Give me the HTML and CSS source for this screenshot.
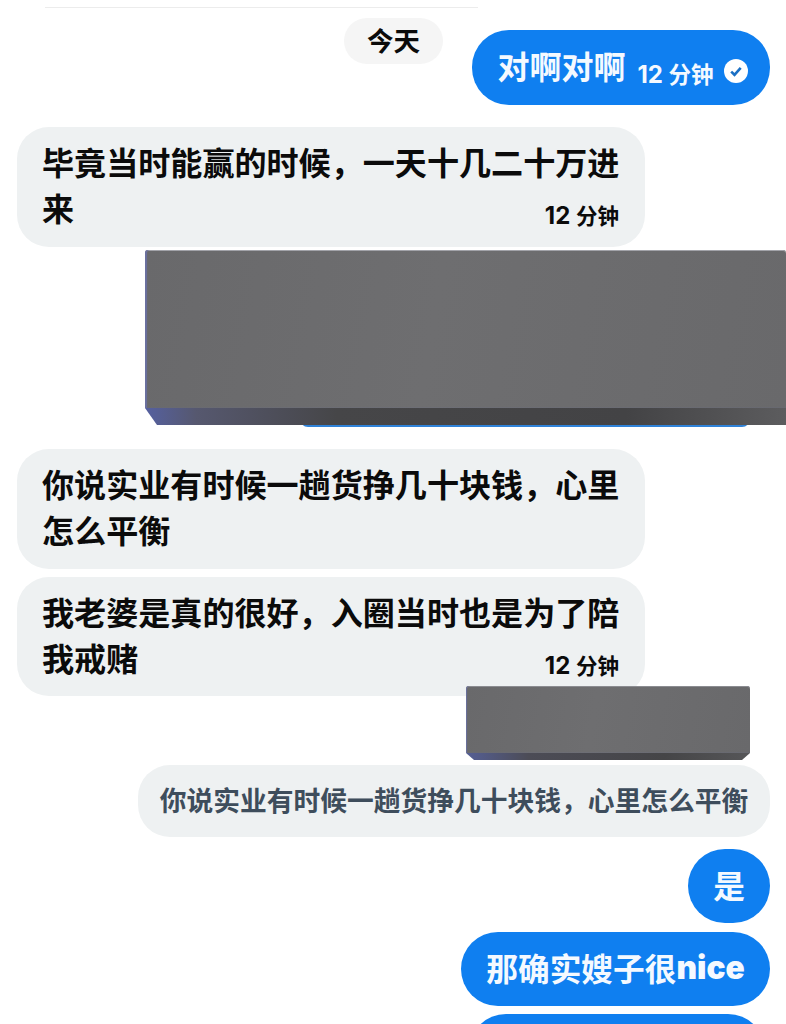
FILE: index.html
```html
<!DOCTYPE html>
<html lang="zh-CN">
<head>
  <meta charset="UTF-8" />
  <meta name="viewport" content="width=device-width, initial-scale=1.0"/>
  <title>聊天记录</title>
  <link rel="stylesheet" href="styles.css">
</head>
<body>
  <div class="chat">
    <div class="top-line"></div>

    <div class="day-row">
      <div class="day-chip">今天</div>
      <div class="bubble sent first">
        <span class="first-text">对啊对啊</span>
        <span class="time">12 <i>分钟</i></span>
        <svg class="check" viewBox="0 0 24 24">
          <circle cx="12" cy="12" r="12" fill="#fff"/>
          <path d="M7.2 12.6l3.3 3.2 6.2-7" fill="none" stroke="#1a6fc4" stroke-width="2.6"/>
        </svg>
      </div>
    </div>

    <div class="bubble received after-day">
      <div>毕竟当时能赢的时候，一天十几二十万进</div>
      <div class="last-line">
        <span>来</span>
        <span class="time">12 <i>分钟</i></span>
      </div>
    </div>

    <div class="redact-wrap">
      <div class="sliver"></div>
      <div class="redact big"><div class="face"></div><div class="bevel"></div></div>
    </div>

    <div class="bubble received">
      <div>你说实业有时候一趟货挣几十块钱，心里怎么平衡</div>
    </div>

    <div class="bubble received next">
      <div>我老婆是真的很好，入圈当时也是为了陪</div>
      <div class="last-line">
        <span>我戒赌</span>
        <span class="time">12 <i>分钟</i></span>
      </div>
    </div>

    <div class="redact small"><div class="face"></div><div class="bevel"></div></div>

    <div class="bubble quote">你说实业有时候一趟货挣几十块钱，心里怎么平衡</div>

    <div class="bubble sent solo">是</div>
    <div class="bubble sent wide">那确实嫂子很<b>nice</b></div>
    <div class="bubble sent cut"></div>
  </div>
</body>
</html>
```

FILE: styles.css
```css
:root {
  --blue: #0f7ff0;
  --grey: #eef1f2;
}

html, body {
  height: 1024px;
  margin: 0;
  overflow: hidden;
  background: #fff;
  font-family: "Inter", "Noto Sans CJK SC", sans-serif;
  color: #0b0b0b;
}

.chat {
  box-sizing: border-box;
  display: flex;
  flex-direction: column;
  align-items: flex-end;
  height: 1024px;
  padding: 7px 16px 0 17px;
  overflow: hidden;
}

.chat > * {
  flex-shrink: 0;
}

.top-line {
  align-self: flex-start;
  width: 433px;
  height: 1px;
  margin-left: 28px;
  background: #ececec;
}

.day-row {
  display: flex;
  align-items: flex-start;
  margin-top: 10px;
}

.day-chip {
  width: 99px;
  height: 46px;
  margin-right: 29px;
  border-radius: 23px;
  background: #f5f5f5;
  font-size: 26.5px;
  font-weight: 600;
  line-height: 46px;
  text-align: center;
}

.bubble {
  box-sizing: border-box;
  font-weight: 700;
}

.sent {
  display: flex;
  align-items: center;
  justify-content: center;
  height: 74px;
  padding-bottom: 4px;
  border-radius: 37px;
  background: var(--blue);
  color: #f4f9ff;
  font-size: 31.7px;
  font-weight: 700;
}

.first {
  width: 298px;
  height: 75px;
  margin-top: 12px;
  padding: 0 0 0 3px;
}

.first-text {
  margin-bottom: 6px;
  font-size: 32px;
}

.first .time {
  margin: 14px 0 0 12px;
}

.first .time i {
  font-size: 22.5px;
}

.check {
  width: 24px;
  height: 24px;
  margin: 7px 0 0 10px;
}

.time {
  font-size: 24px;
  font-weight: 700;
  line-height: 30px;
  white-space: nowrap;
}

.time i {
  font-size: 21.5px;
  font-style: normal;
  font-weight: 700;
}

.received {
  align-self: flex-start;
  width: 628px;
  height: 120px;
  padding: 14px 24px 0 25px;
  border-radius: 32px;
  background: var(--grey);
  font-size: 32.1px;
  line-height: 46px;
}

.last-line {
  display: flex;
  justify-content: space-between;
  align-items: center;
}

.last-line .time {
  margin: 11px 2px 0 0;
}

.after-day {
  margin-top: 22px;
}

.next {
  height: 119px;
  margin-top: 8px;
}

.redact-wrap {
  align-self: flex-start;
  height: 177px;
  margin: 3px 0 22px 128px;
}

.redact-wrap .sliver {
  width: 450px;
  height: 12px;
  margin: 165px 0 0 155px;
  border-radius: 0 0 8px 8px;
  background: #2f82d8;
}

.redact {
  display: flex;
  flex-direction: column;
}

.face {
  flex: 1;
  border-radius: 3px 3px 0 0;
  background: linear-gradient(100deg, #69696b, #6e6e70 45%, #69696b);
  box-shadow: inset 2px 0 1px #6a70a0, inset 0 1px 0 #a9a9aa;
}

.bevel {
  height: 17px;
  background: linear-gradient(90deg, #5560a0 0, #56586f 8%, #464648 30%, #434345 75%, #5c5c5e 100%);
  clip-path: polygon(0 0, 100% 0, 100% 100%, 12px 100%);
}

.big {
  position: relative;
  width: 641px;
  height: 175px;
  margin-top: -177px;
}

.small {
  position: relative;
  z-index: 1;
  width: 284px;
  height: 74px;
  margin: -10px 20px 0 0;
}

.small .face {
  box-shadow: inset 1px 0 1px #6a70a0, inset 0 1px 0 #8f8f90;
}

.small .bevel {
  height: 7px;
  background: linear-gradient(90deg, #555f95 0, #4c4c56 22%, #454547 70%, #565658 100%);
  clip-path: polygon(0 0, 100% 0, calc(100% - 8px) 100%, 8px 100%);
}

.quote {
  width: 632px;
  height: 72px;
  margin-top: 5px;
  border-radius: 32px;
  background: var(--grey);
  color: #3e4d5c;
  font-size: 26.75px;
  font-weight: 700;
  line-height: 72px;
  text-align: center;
  white-space: nowrap;
}

.solo {
  width: 82px;
  margin-top: 12px;
}

.wide {
  width: 309px;
  margin-top: 9px;
}

.cut {
  width: 296px;
  margin: 8px 5px 0 0;
}
```
